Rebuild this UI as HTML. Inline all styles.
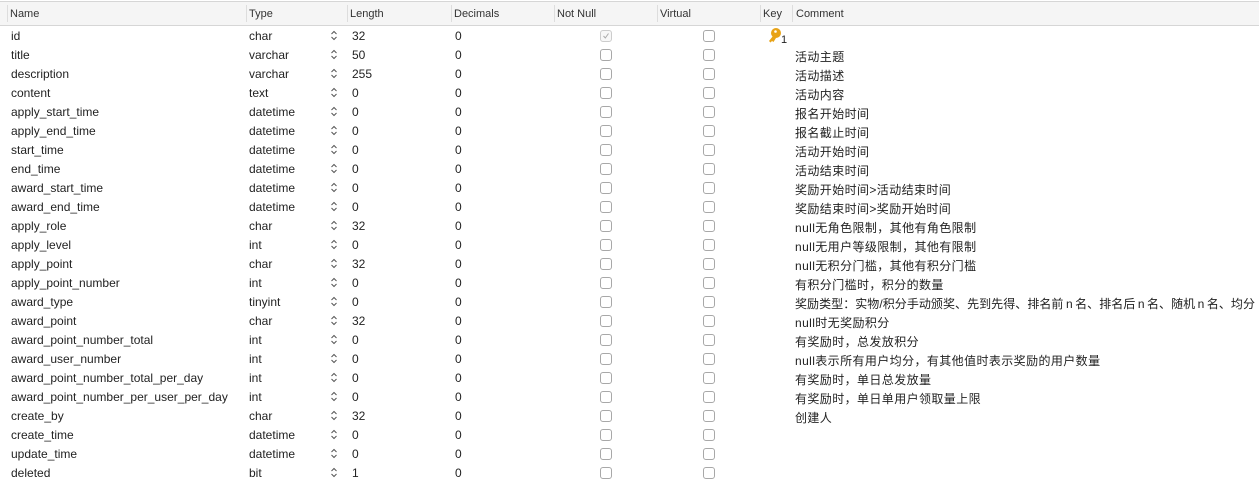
<!DOCTYPE html>
<html><head><meta charset="utf-8"><style>
body{margin:0;width:1259px;height:484px;background:#fff;overflow:hidden;font-family:"Liberation Sans","Noto Sans CJK SC",sans-serif;font-size:12px;color:#222;position:relative}
.hd{position:absolute;left:0;top:1px;width:1259px;height:23px;background:#f5f5f5;border-top:1px solid #d6d6d6;border-bottom:1px solid #d6d6d6}
.hd span{position:absolute;top:6px;font-size:11px;color:#333}
.hd i{position:absolute;top:3px;width:1px;height:17px;background:#ddd}
.r{position:absolute;left:0;width:1259px;height:19px}
.r span{position:absolute;top:3px;white-space:nowrap}
.cb{position:absolute;top:4px;width:10px;height:10px;border:1px solid #a8a8a8;border-radius:3px;background:#fff}
.ar{position:absolute;left:330px;top:3px;width:8px;height:13px}
.c{top:3px!important;font-size:12px;letter-spacing:0.4px}
</style></head><body>
<div class="hd">
<i style="left:7px"></i><span style="left:10px">Name</span>
<i style="left:246px"></i><span style="left:249px">Type</span>
<i style="left:347px"></i><span style="left:350px">Length</span>
<i style="left:451px"></i><span style="left:454px">Decimals</span>
<i style="left:554px"></i><span style="left:557px">Not Null</span>
<i style="left:657px"></i><span style="left:660px">Virtual</span>
<i style="left:760px"></i><span style="left:763px">Key</span>
<i style="left:792px"></i><span style="left:796px">Comment</span>
</div>
<svg width="0" height="0" style="position:absolute"><defs><symbol id="a" viewBox="0 0 8 13"><path d="M1.5 5 L4 2.5 L6.5 5 M1.5 8 L4 10.5 L6.5 8" fill="none" stroke="#555" stroke-width="1"/></symbol></defs></svg>
<div class="r" style="top:26px"><span style="left:11px">id</span><span style="left:249px">char</span><svg class="ar"><use href="#a"/></svg><span style="left:352px">32</span><span style="left:455px">0</span><div class="cb" style="left:600px;border-color:#ccc;background:#f7f7f7"><svg width="10" height="10" style="position:absolute;left:0;top:0"><path d="M2.5 5 L4.3 7 L7.5 2.5" fill="none" stroke="#aaa" stroke-width="1"/></svg></div><div class="cb" style="left:703px"></div><svg style="position:absolute;left:768px;top:1px" width="22" height="18"><circle cx="8" cy="6" r="5" fill="#e8a317"/><circle cx="7.5" cy="4.5" r="1.3" fill="#fff"/><path d="M5 9 L1 14 L2.5 15.5 L4 14 L5.5 15 L8 11" fill="#e8a317"/><text x="13" y="16" font-size="11" fill="#222" font-family="Liberation Sans">1</text></svg></div>
<div class="r" style="top:45px"><span style="left:11px">title</span><span style="left:249px">varchar</span><svg class="ar"><use href="#a"/></svg><span style="left:352px">50</span><span style="left:455px">0</span><div class="cb" style="left:600px"></div><div class="cb" style="left:703px"></div><span class="c" style="left:795px">活动主题</span></div>
<div class="r" style="top:64px"><span style="left:11px">description</span><span style="left:249px">varchar</span><svg class="ar"><use href="#a"/></svg><span style="left:352px">255</span><span style="left:455px">0</span><div class="cb" style="left:600px"></div><div class="cb" style="left:703px"></div><span class="c" style="left:795px">活动描述</span></div>
<div class="r" style="top:83px"><span style="left:11px">content</span><span style="left:249px">text</span><svg class="ar"><use href="#a"/></svg><span style="left:352px">0</span><span style="left:455px">0</span><div class="cb" style="left:600px"></div><div class="cb" style="left:703px"></div><span class="c" style="left:795px">活动内容</span></div>
<div class="r" style="top:102px"><span style="left:11px">apply_start_time</span><span style="left:249px">datetime</span><svg class="ar"><use href="#a"/></svg><span style="left:352px">0</span><span style="left:455px">0</span><div class="cb" style="left:600px"></div><div class="cb" style="left:703px"></div><span class="c" style="left:795px">报名开始时间</span></div>
<div class="r" style="top:121px"><span style="left:11px">apply_end_time</span><span style="left:249px">datetime</span><svg class="ar"><use href="#a"/></svg><span style="left:352px">0</span><span style="left:455px">0</span><div class="cb" style="left:600px"></div><div class="cb" style="left:703px"></div><span class="c" style="left:795px">报名截止时间</span></div>
<div class="r" style="top:140px"><span style="left:11px">start_time</span><span style="left:249px">datetime</span><svg class="ar"><use href="#a"/></svg><span style="left:352px">0</span><span style="left:455px">0</span><div class="cb" style="left:600px"></div><div class="cb" style="left:703px"></div><span class="c" style="left:795px">活动开始时间</span></div>
<div class="r" style="top:159px"><span style="left:11px">end_time</span><span style="left:249px">datetime</span><svg class="ar"><use href="#a"/></svg><span style="left:352px">0</span><span style="left:455px">0</span><div class="cb" style="left:600px"></div><div class="cb" style="left:703px"></div><span class="c" style="left:795px">活动结束时间</span></div>
<div class="r" style="top:178px"><span style="left:11px">award_start_time</span><span style="left:249px">datetime</span><svg class="ar"><use href="#a"/></svg><span style="left:352px">0</span><span style="left:455px">0</span><div class="cb" style="left:600px"></div><div class="cb" style="left:703px"></div><span class="c" style="left:795px">奖励开始时间&gt;活动结束时间</span></div>
<div class="r" style="top:197px"><span style="left:11px">award_end_time</span><span style="left:249px">datetime</span><svg class="ar"><use href="#a"/></svg><span style="left:352px">0</span><span style="left:455px">0</span><div class="cb" style="left:600px"></div><div class="cb" style="left:703px"></div><span class="c" style="left:795px">奖励结束时间&gt;奖励开始时间</span></div>
<div class="r" style="top:216px"><span style="left:11px">apply_role</span><span style="left:249px">char</span><svg class="ar"><use href="#a"/></svg><span style="left:352px">32</span><span style="left:455px">0</span><div class="cb" style="left:600px"></div><div class="cb" style="left:703px"></div><span class="c" style="left:795px">null无角色限制，其他有角色限制</span></div>
<div class="r" style="top:235px"><span style="left:11px">apply_level</span><span style="left:249px">int</span><svg class="ar"><use href="#a"/></svg><span style="left:352px">0</span><span style="left:455px">0</span><div class="cb" style="left:600px"></div><div class="cb" style="left:703px"></div><span class="c" style="left:795px">null无用户等级限制，其他有限制</span></div>
<div class="r" style="top:254px"><span style="left:11px">apply_point</span><span style="left:249px">char</span><svg class="ar"><use href="#a"/></svg><span style="left:352px">32</span><span style="left:455px">0</span><div class="cb" style="left:600px"></div><div class="cb" style="left:703px"></div><span class="c" style="left:795px">null无积分门槛，其他有积分门槛</span></div>
<div class="r" style="top:273px"><span style="left:11px">apply_point_number</span><span style="left:249px">int</span><svg class="ar"><use href="#a"/></svg><span style="left:352px">0</span><span style="left:455px">0</span><div class="cb" style="left:600px"></div><div class="cb" style="left:703px"></div><span class="c" style="left:795px">有积分门槛时，积分的数量</span></div>
<div class="r" style="top:292px"><span style="left:11px">award_type</span><span style="left:249px">tinyint</span><svg class="ar"><use href="#a"/></svg><span style="left:352px">0</span><span style="left:455px">0</span><div class="cb" style="left:600px"></div><div class="cb" style="left:703px"></div><span class="c" style="left:795px;letter-spacing:0.05px">奖励类型：实物/积分手动颁奖、先到先得、排名前&thinsp;n&thinsp;名、排名后&thinsp;n&thinsp;名、随机&thinsp;n&thinsp;名、均分</span></div>
<div class="r" style="top:311px"><span style="left:11px">award_point</span><span style="left:249px">char</span><svg class="ar"><use href="#a"/></svg><span style="left:352px">32</span><span style="left:455px">0</span><div class="cb" style="left:600px"></div><div class="cb" style="left:703px"></div><span class="c" style="left:795px">null时无奖励积分</span></div>
<div class="r" style="top:330px"><span style="left:11px">award_point_number_total</span><span style="left:249px">int</span><svg class="ar"><use href="#a"/></svg><span style="left:352px">0</span><span style="left:455px">0</span><div class="cb" style="left:600px"></div><div class="cb" style="left:703px"></div><span class="c" style="left:795px">有奖励时，总发放积分</span></div>
<div class="r" style="top:349px"><span style="left:11px">award_user_number</span><span style="left:249px">int</span><svg class="ar"><use href="#a"/></svg><span style="left:352px">0</span><span style="left:455px">0</span><div class="cb" style="left:600px"></div><div class="cb" style="left:703px"></div><span class="c" style="left:795px">null表示所有用户均分，有其他值时表示奖励的用户数量</span></div>
<div class="r" style="top:368px"><span style="left:11px">award_point_number_total_per_day</span><span style="left:249px">int</span><svg class="ar"><use href="#a"/></svg><span style="left:352px">0</span><span style="left:455px">0</span><div class="cb" style="left:600px"></div><div class="cb" style="left:703px"></div><span class="c" style="left:795px">有奖励时，单日总发放量</span></div>
<div class="r" style="top:387px"><span style="left:11px">award_point_number_per_user_per_day</span><span style="left:249px">int</span><svg class="ar"><use href="#a"/></svg><span style="left:352px">0</span><span style="left:455px">0</span><div class="cb" style="left:600px"></div><div class="cb" style="left:703px"></div><span class="c" style="left:795px">有奖励时，单日单用户领取量上限</span></div>
<div class="r" style="top:406px"><span style="left:11px">create_by</span><span style="left:249px">char</span><svg class="ar"><use href="#a"/></svg><span style="left:352px">32</span><span style="left:455px">0</span><div class="cb" style="left:600px"></div><div class="cb" style="left:703px"></div><span class="c" style="left:795px">创建人</span></div>
<div class="r" style="top:425px"><span style="left:11px">create_time</span><span style="left:249px">datetime</span><svg class="ar"><use href="#a"/></svg><span style="left:352px">0</span><span style="left:455px">0</span><div class="cb" style="left:600px"></div><div class="cb" style="left:703px"></div></div>
<div class="r" style="top:444px"><span style="left:11px">update_time</span><span style="left:249px">datetime</span><svg class="ar"><use href="#a"/></svg><span style="left:352px">0</span><span style="left:455px">0</span><div class="cb" style="left:600px"></div><div class="cb" style="left:703px"></div></div>
<div class="r" style="top:463px"><span style="left:11px">deleted</span><span style="left:249px">bit</span><svg class="ar"><use href="#a"/></svg><span style="left:352px">1</span><span style="left:455px">0</span><div class="cb" style="left:600px"></div><div class="cb" style="left:703px"></div></div>
</body></html>
